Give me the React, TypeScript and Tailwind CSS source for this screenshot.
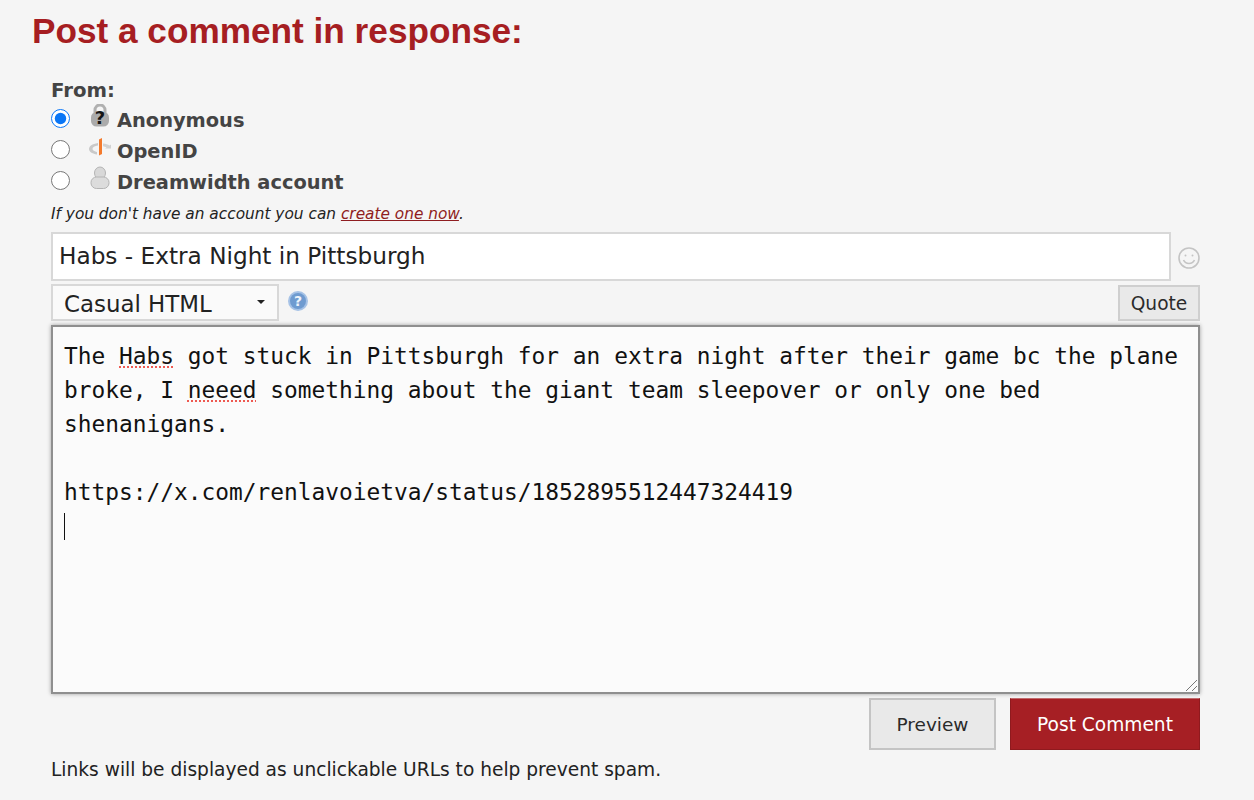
const Lock = () => (
  <svg width="20" height="24" viewBox="0 0 20 24">
    <path d="M5 9V6a5 5 0 0 1 10 0v3" fill="none" stroke="#b0b0b0" strokeWidth="3" />
    <rect x="1" y="8" width="18" height="14.500" rx="5.500" fill="#ababab" />
    <text x="10" y="19.500" textAnchor="middle" fontSize="18" fontWeight="700" fontFamily="'DejaVu Sans', sans-serif" fill="#141414">?</text>
  </svg>
);
const OpenIdIcon = () => (
  <svg width="24" height="24" viewBox="0 0 24 24">
    <path d="M10 8C4 9 1 11 1 14c0 3 4 5 8 5.500V17c-2.500-.5-4.500-1.500-4.500-3.200 0-1.500 2-2.800 5.500-3.300z" fill="#c9c9c9" />
    <path d="M15 8.500c3 .2 5 1 6.500 2l1.500-1v4h-6l1.500-1c-1-.7-2.200-1.200-3.500-1.300z" fill="#d2d2d2" />
    <path d="M11 4.500l3-1.500v16l-3 1.500z" fill="#f47a2c" />
  </svg>
);
const User = () => (
  <svg width="20" height="24" viewBox="0 0 20 24">
    <ellipse cx="10" cy="7" rx="5.500" ry="6" fill="#d8d8d8" stroke="#b4b4b4" />
    <rect x="1" y="11" width="18" height="11.500" rx="5.500" fill="#dcdcdc" stroke="#b4b4b4" />
  </svg>
);
const Smiley = () => (
  <svg width="24" height="24" viewBox="0 0 24 24" fill="none" stroke="#c4c4c4" strokeWidth="1.600">
    <circle cx="12" cy="12" r="10" />
    <circle cx="8.500" cy="9.500" r="1" fill="#c4c4c4" stroke="none" />
    <circle cx="15.500" cy="9.500" r="1" fill="#c4c4c4" stroke="none" />
    <path d="M6.500 14c1.200 2.500 3.200 3.500 5.500 3.500s4.300-1 5.500-3.500" />
  </svg>
);
const Help = () => (
  <svg width="22" height="22" viewBox="0 0 22 22">
    <circle cx="11" cy="11" r="10" fill="#a6c2e6" />
    <circle cx="11" cy="11" r="8" fill="#6f9bd0" />
    <text x="11" y="16" textAnchor="middle" fontSize="14" fontWeight="700" fontFamily="'DejaVu Sans', sans-serif" fill="#eef4fb">?</text>
  </svg>
);

function RadioRow({ label, checked, icon }: { label: string; checked?: boolean; icon: React.ReactNode }) {
  return (
    <label className="flex h-[31px] items-center">
      <input type="radio" name="from" defaultChecked={checked} className="m-0 h-[19px] w-[19px] accent-[#0a76f6]" />
      <span className="ml-[16px] mb-[6px] flex w-[31px] justify-center pr-[4px]">{icon}</span>
      <span className="mt-[5px] text-[19.400px] font-bold text-[#444]">{label}</span>
    </label>
  );
}

const Spell = ({ children }: { children: React.ReactNode }) => (
  <span className="underline decoration-dotted decoration-[#ee5a52] decoration-2 underline-offset-[2px]">{children}</span>
);

export default function App() {
  return (
    <div className="h-[800px] overflow-hidden bg-[#f5f5f5] font-['DejaVu_Sans',sans-serif] text-[#222]">
      <h1 className="pl-[32px] pt-[9px] font-['Liberation_Sans',sans-serif] text-[35.200px] leading-[44px] font-bold text-[#a61e22]">
        Post a comment in response:
      </h1>
      <div className="w-[1149px] ml-[51px] mt-[25px]">
        <div className="text-[19.700px] leading-[26px] font-bold text-[#444]">From:</div>
        <div className="mt-[-1px]">
          <RadioRow label="Anonymous" checked icon={<Lock />} />
          <RadioRow label="OpenID" icon={<OpenIdIcon />} />
          <RadioRow label="Dreamwidth account" icon={<User />} />
        </div>
        <p className="mt-[8px] text-[15.350px] leading-[20px] italic text-[#222]">
          If you don't have an account you can <a className="text-[#8f1d21] underline">create one now</a>.
        </p>
        <div className="mt-[8px] flex items-center justify-between">
          <div className="flex h-[49px] w-[1120px] items-center border-2 border-[#d8d8d8] bg-white px-[6px] text-[23.200px] text-[#222]">
            Habs - Extra Night in Pittsburgh
          </div>
          <span className="mr-[-1px] mt-[3px]"><Smiley /></span>
        </div>
        <div className="mt-[3px] flex h-[37px] items-center justify-between">
          <div className="flex items-center">
            <div className="relative flex h-[37px] w-[228px] items-center border-2 border-[#d8d8d8] bg-[#fafafa] pl-[11px] pt-[4px] text-[22.900px] text-[#222]">
              Casual HTML
              <span className="absolute right-[12px] top-[14px] h-0 w-0 border-x-[4px] border-t-[4px] border-x-transparent border-t-[#222]" />
            </div>
            <span className="ml-[8px] mb-[4px]"><Help /></span>
          </div>
          <button className="flex h-[36px] w-[82px] items-center justify-center border-2 border-[#cfcfcf] bg-[#e9e9e9] pt-[3px] text-[18.600px] text-[#2b2b2b]">
            Quote
          </button>
        </div>
        <div className="relative mt-[4px] h-[369px] border-2 border-[#8f8f8f] bg-[#fbfbfb] pl-[11px] pt-[12px] font-['DejaVu_Sans_Mono',monospace] text-[22.850px] leading-[34px] text-[#111] shadow-[0_0_4px_rgba(0,0,0,0.35)]">
          <div>The <Spell>Habs</Spell> got stuck in Pittsburgh for an extra night after their game bc the plane</div>
          <div>broke, I <Spell>neeed</Spell> something about the giant team sleepover or only one bed</div>
          <div>shenanigans.</div>
          <div className="h-[34px]" />
          <div>https://x.com/renlavoietva/status/1852895512447324419</div>
          <div className="flex h-[34px] items-center"><span className="mt-[1px] h-[27px] w-[1px] bg-[#111]" /></div>
          <svg className="absolute bottom-0 right-0" width="13" height="13" viewBox="0 0 13 13" stroke="#777" strokeWidth="1">
            <path d="M1 12L12 1M7 12l5-5" />
          </svg>
        </div>
        <div className="mt-[4px] flex justify-end gap-[14px]">
          <button className="flex h-[52px] w-[127px] items-center justify-center border-2 border-[#c4c4c4] bg-[#e9e9e9] pt-[2px] text-[18.500px] text-[#2b2b2b]">
            Preview
          </button>
          <button className="flex h-[52px] w-[190px] items-center justify-center border border-[#8f1a1e] border-t-[#c06a6c] bg-[#a61f24] pt-[2px] text-[18.600px] text-white">
            Post Comment
          </button>
        </div>
        <p className="mt-[8px] text-[18.600px] leading-[24px] text-[#222]">
          Links will be displayed as unclickable URLs to help prevent spam.
        </p>
      </div>
    </div>
  );
}
